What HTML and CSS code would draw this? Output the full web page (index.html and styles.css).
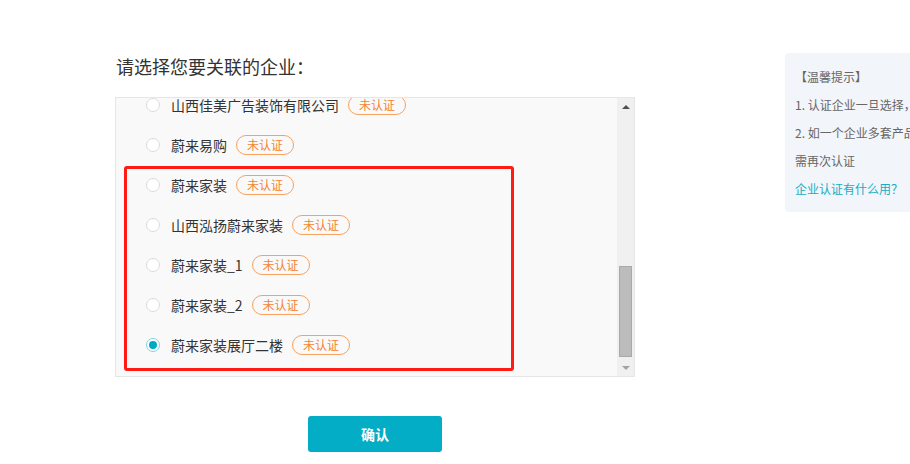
FILE: index.html
```html
<!DOCTYPE html>
<html lang="zh-CN">
<head>
<meta charset="utf-8">
<title>选择关联企业</title>
<link rel="stylesheet" href="styles.css">
</head>
<body>
<div class="page">
  <div class="main">
    <div class="title">请选择您要关联的企业：</div>
    <div class="list-box">
      <div class="list-view">
        <div class="list">
          <div class="row"><span class="radio"></span><span class="name">山西佳美广告装饰有限公司</span><span class="badge">未认证</span></div>
          <div class="row"><span class="radio"></span><span class="name">蔚来易购</span><span class="badge">未认证</span></div>
          <div class="row"><span class="radio"></span><span class="name">蔚来家装</span><span class="badge">未认证</span></div>
          <div class="row"><span class="radio"></span><span class="name">山西泓扬蔚来家装</span><span class="badge">未认证</span></div>
          <div class="row"><span class="radio"></span><span class="name">蔚来家装_1</span><span class="badge">未认证</span></div>
          <div class="row"><span class="radio"></span><span class="name">蔚来家装_2</span><span class="badge">未认证</span></div>
          <div class="row"><span class="radio checked"></span><span class="name">蔚来家装展厅二楼</span><span class="badge">未认证</span></div>
        </div>
      </div>
      <div class="scrollbar">
        <div class="sb-btn"><span class="arrow-up"></span></div>
        <div class="sb-track"><div class="sb-thumb"></div></div>
        <div class="sb-btn"><span class="arrow-down"></span></div>
      </div>
      <div class="highlight"></div>
    </div>
    <div class="actions">
      <button class="confirm">确认</button>
    </div>
  </div>
  <div class="tips">
    <div class="tip-line">【温馨提示】</div>
    <div class="tip-line">1. 认证企业一旦选择，不可更改</div>
    <div class="tip-line">2. 如一个企业多套产品，</div>
    <div class="tip-line">需再次认证</div>
    <div class="tip-line link">企业认证有什么用？</div>
  </div>
</div>
</body>
</html>
```

FILE: styles.css
```css
html, body {
  margin: 0;
  padding: 0;
  background: #fff;
  overflow: hidden;
}
body {
  font-family: "Noto Sans CJK SC", "Noto Sans", sans-serif;
  color: #333;
  width: 910px;
  height: 464px;
}
.page {
  display: flex;
  align-items: flex-start;
  padding-left: 115px;
}
.main {
  width: 520px;
  padding-top: 50px;
  flex: none;
}
.title {
  font-size: 18px;
  line-height: 32px;
  color: #333;
  margin-bottom: 15px;
  padding-left: 1px;
}
.list-box {
  position: relative;
  height: 278px;
  border: 1px solid #e6e6e6;
  background: #f9f9f9;
  display: flex;
}
.list-view {
  flex: 1;
  overflow: hidden;
}
.list {
  margin-top: -13px;
}
.row {
  height: 40px;
  display: flex;
  align-items: center;
  padding-left: 30px;
  font-size: 14px;
}
.radio {
  width: 14px;
  height: 14px;
  box-sizing: border-box;
  border: 1px solid #dcdcdc;
  border-radius: 50%;
  background: #fff;
  margin-right: 11px;
  flex: none;
  display: flex;
  align-items: center;
  justify-content: center;
}
.radio.checked {
  border-color: #7fd3e0;
}
.radio.checked::after {
  content: "";
  width: 8px;
  height: 8px;
  border-radius: 50%;
  background: #00a9c2;
}
.name {
  color: #333;
  line-height: 20px;
}
.badge {
  margin-left: 9px;
  height: 20px;
  box-sizing: border-box;
  border: 1px solid #f6a160;
  border-radius: 10px;
  padding: 0 10px;
  font-size: 12px;
  line-height: 18px;
  color: #f5822f;
}
.scrollbar {
  width: 17px;
  flex: none;
  background: #f0f0f0;
  display: flex;
  flex-direction: column;
}
.sb-btn {
  height: 17px;
  display: flex;
  align-items: center;
  justify-content: center;
}
.arrow-up {
  width: 0;
  height: 0;
  border-left: 4px solid transparent;
  border-right: 4px solid transparent;
  border-bottom: 4px solid #505050;
}
.arrow-down {
  width: 0;
  height: 0;
  border-left: 4px solid transparent;
  border-right: 4px solid transparent;
  border-top: 4px solid #a3a3a3;
}
.sb-track {
  flex: 1;
  padding: 0 2px;
}
.sb-thumb {
  margin-top: 151px;
  height: 91px;
  box-sizing: border-box;
  background: #bcbcbc;
  border: 1px solid #a9a9a9;
}
.highlight {
  position: absolute;
  left: 8px;
  top: 68px;
  width: 390px;
  height: 205px;
  box-sizing: border-box;
  border: 3px solid #ff1a12;
  border-radius: 3px;
  pointer-events: none;
}
.actions {
  display: flex;
  justify-content: center;
  margin-top: 39px;
}
.confirm {
  width: 134px;
  height: 36px;
  border: none;
  border-radius: 3px;
  background: #02adc5;
  color: #fff;
  font-family: "Noto Sans CJK SC", "Noto Sans", sans-serif;
  font-size: 14px;
  font-weight: bold;
  cursor: pointer;
}
.tips {
  margin-left: 150px;
  margin-top: 53px;
  width: 220px;
  flex: none;
  height: 159px;
  box-sizing: border-box;
  background: #f2f5f9;
  border-radius: 4px;
  padding: 10px 0 0 10px;
}
.tip-line {
  font-size: 12px;
  line-height: 28px;
  color: #666;
  white-space: nowrap;
}
.tip-line.link {
  color: #14aec6;
}
```
